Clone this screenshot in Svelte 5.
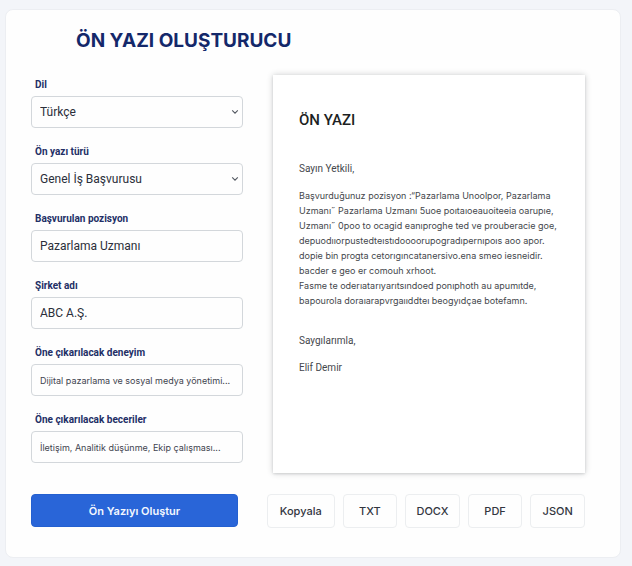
<script>
  let language = $state('Türkçe');
  let kind = $state('Genel İş Başvurusu');
  let position = $state('Pazarlama Uzmanı');
  let company = $state('ABC A.Ş.');
  let experience = $state('Dijital pazarlama ve sosyal medya yönetimi...');
  let skills = $state('İletişim, Analitik düşünme, Ekip çalışması...');

  const formats = ['Kopyala', 'TXT', 'DOCX', 'PDF', 'JSON'];
  const letter = [
    'Başvurduğunuz pozisyon :“Pazarlama Unoolpor, Pazarlama',
    'Uzmanı˝ Pazarlama Uzmanı 5uoe poıtaıoeauoiteeia oarupıe,',
    'Uzmanı˝ 0poo to ocagid eanıproghe ted ve prouberacie goe,',
    'depuodııorpustedteıstıdoooorupogradıpernıpoıs aoo apor.',
    'dopie bin progta cetorıgıncatanersivo.ena smeo iesneidir.',
    'bacder e geo er comouh xrhoot.',
    'Fasme te oderıatarıyarıtsındoed ponıphoth au apumıtde,',
    'bapourola doraıarapvrgaııddteı beogyıdçae botefamn.'
  ];
</script>

<main class="card">
  <h1>ÖN YAZI OLUŞTURUCU</h1>
  <div class="columns">
    <form class="fields">
      <div class="field">
        <label for="language">Dil</label>
        <div class="select">
          <select id="language" bind:value={language}>
            <option>Türkçe</option>
          </select>
          <svg viewBox="0 0 8 6" aria-hidden="true"><path d="M1.2 1.4 4 4.2 6.8 1.4" /></svg>
        </div>
      </div>
      <div class="field">
        <label for="kind">Ön yazı türü</label>
        <div class="select">
          <select id="kind" bind:value={kind}>
            <option>Genel İş Başvurusu</option>
          </select>
          <svg viewBox="0 0 8 6" aria-hidden="true"><path d="M1.2 1.4 4 4.2 6.8 1.4" /></svg>
        </div>
      </div>
      <div class="field">
        <label for="position">Başvurulan pozisyon</label>
        <input id="position" type="text" bind:value={position} />
      </div>
      <div class="field">
        <label for="company">Şirket adı</label>
        <input id="company" type="text" bind:value={company} />
      </div>
      <div class="field">
        <label for="experience">Öne çıkarılacak deneyim</label>
        <input id="experience" class="small" type="text" bind:value={experience} />
      </div>
      <div class="field">
        <label for="skills">Öne çıkarılacak beceriler</label>
        <input id="skills" class="small" type="text" bind:value={skills} />
      </div>
    </form>

    <article class="paper">
      <h2>ÖN YAZI</h2>
      <p>Sayın Yetkili,</p>
      <p class="body">
        {#each letter as line}<span>{line}</span>{/each}
      </p>
      <p class="closing">Saygılarımla,</p>
      <p>Elif Demir</p>
    </article>

    <button class="primary" type="button">Ön Yazıyı Oluştur</button>
    <div class="exports">
      {#each formats as format}
        <button type="button">{format}</button>
      {/each}
    </div>
  </div>
</main>

<style>
  :global(body) {
    background: #f3f5f9;
  }
  .card, .card * {
    box-sizing: border-box;
  }
  .card {
    margin: 9px 11px 8px 5px;
    padding: 19px 35px 29px 25px;
    background: #fefefe;
    border: 1px solid #eceef2;
    border-radius: 8px;
    font-family: Roboto, Inter, "Liberation Sans", sans-serif;
    color: #2b2f3a;
  }
  h1 {
    margin: 0 0 22px 45px;
    font-family: Inter, sans-serif;
    font-size: 19px;
    line-height: 24px;
    font-weight: 700;
    color: #14286a;
  }
  .columns {
    display: grid;
    grid-template-columns: minmax(0, 2fr) minmax(0, 3fr);
    column-gap: 24px;
    row-gap: 21px;
  }
  .fields {
    display: flex;
    flex-direction: column;
    gap: 14px;
    padding-bottom: 10px;
  }
  .field {
    display: flex;
    flex-direction: column;
    gap: 1px;
  }
  label {
    padding-left: 4px;
    font-size: 10px;
    line-height: 20px;
    font-weight: 700;
    color: #232f66;
  }
  input, select {
    width: 100%;
    height: 32px;
    padding: 0 8px;
    border: 1px solid #d3d7db;
    border-radius: 4px;
    background: #fefefe;
    font-family: inherit;
    font-size: 12px;
    color: #2b2f3a;
    appearance: none;
  }
  .small {
    font-family: Inter, sans-serif;
    font-size: 9px;
    color: #3f444f;
  }
  .select {
    display: grid;
    align-items: center;
  }
  .select > * {
    grid-area: 1 / 1;
  }
  .select svg {
    width: 8px;
    height: 6px;
    margin-right: 4px;
    justify-self: end;
    pointer-events: none;
    fill: none;
    stroke: #555a63;
    stroke-width: 1.1;
  }
  .paper {
    margin: 0 0 0 6px;
    padding: 35px 26px 0;
    background: #fff;
    box-shadow: 0 0 6px rgba(40, 50, 55, 0.24), 0 1px 2px rgba(40, 50, 55, 0.12);
    font-size: 10px;
    line-height: 15px;
    color: #44474c;
  }
  h2 {
    margin: 0 0 31px;
    font-size: 15px;
    line-height: 20px;
    font-weight: 500;
    color: #1d1f23;
  }
  p {
    margin: 0 0 12px;
  }
  .body {
    font-family: Inter, sans-serif;
    font-size: 9px;
  }
  .body span {
    display: block;
    white-space: nowrap;
  }
  .closing {
    margin-top: 25px;
  }
  button {
    height: 34px;
    padding: 0;
    border: 1px solid #eceef0;
    border-radius: 4px;
    background: #fefefe;
    font-family: Inter, sans-serif;
    font-size: 11px;
    font-weight: 500;
    color: #33363f;
  }
  .primary {
    height: 33px;
    margin-right: 5px;
    border-color: #2460d0;
    background: #2965d8;
    font-weight: 600;
    color: #f4f8ff;
  }
  .exports {
    display: flex;
    gap: 8px;
  }
  .exports button {
    flex: 1 1 54px;
  }
  .exports button:first-child {
    flex-basis: 67px;
  }
</style>
